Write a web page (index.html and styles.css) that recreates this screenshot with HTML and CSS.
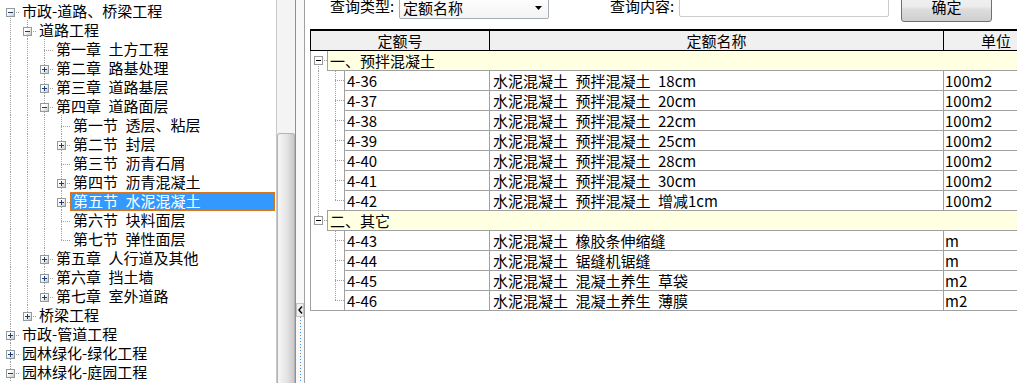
FILE: index.html
```html
<!DOCTYPE html>
<html lang="zh-CN">
<head>
    <meta charset="UTF-8">
    <title>定额查询</title>
    <link rel="stylesheet" href="styles.css">
</head>
<body>
<div class="app">
    <div class="left">
        <div class="tree">
            <div class="row"><span class="n f"><b class="bx mn"></b></span><span class="lb">市政-道路、桥梁工程</span></div>
            <div class="row"><span class="n v"></span><span class="n t"><b class="bx mn"></b></span><span class="lb">道路工程</span></div>
            <div class="row"><span class="n v"></span><span class="n v"></span><span class="n t"></span><span class="lb">第一章&ensp;土方工程</span></div>
            <div class="row"><span class="n v"></span><span class="n v"></span><span class="n t"><b class="bx pl"></b></span><span class="lb">第二章&ensp;路基处理</span></div>
            <div class="row"><span class="n v"></span><span class="n v"></span><span class="n t"><b class="bx pl"></b></span><span class="lb">第三章&ensp;道路基层</span></div>
            <div class="row"><span class="n v"></span><span class="n v"></span><span class="n t"><b class="bx mn"></b></span><span class="lb">第四章&ensp;道路面层</span></div>
            <div class="row"><span class="n v"></span><span class="n v"></span><span class="n v"></span><span class="n t"></span><span class="lb">第一节&ensp;透层、粘层</span></div>
            <div class="row"><span class="n v"></span><span class="n v"></span><span class="n v"></span><span class="n t"><b class="bx pl"></b></span><span class="lb">第二节&ensp;封层</span></div>
            <div class="row"><span class="n v"></span><span class="n v"></span><span class="n v"></span><span class="n t"></span><span class="lb">第三节&ensp;沥青石屑</span></div>
            <div class="row"><span class="n v"></span><span class="n v"></span><span class="n v"></span><span class="n t"><b class="bx pl"></b></span><span class="lb">第四节&ensp;沥青混凝土</span></div>
            <div class="row"><span class="n v"></span><span class="n v"></span><span class="n v"></span><span class="n t"><b class="bx pl"></b></span><span class="lb active">第五节&ensp;水泥混凝土</span></div>
            <div class="row"><span class="n v"></span><span class="n v"></span><span class="n v"></span><span class="n t"></span><span class="lb">第六节&ensp;块料面层</span></div>
            <div class="row"><span class="n v"></span><span class="n v"></span><span class="n v"></span><span class="n l"></span><span class="lb">第七节&ensp;弹性面层</span></div>
            <div class="row"><span class="n v"></span><span class="n v"></span><span class="n t"><b class="bx pl"></b></span><span class="lb">第五章&ensp;人行道及其他</span></div>
            <div class="row"><span class="n v"></span><span class="n v"></span><span class="n t"><b class="bx pl"></b></span><span class="lb">第六章&ensp;挡土墙</span></div>
            <div class="row"><span class="n v"></span><span class="n v"></span><span class="n l"><b class="bx pl"></b></span><span class="lb">第七章&ensp;室外道路</span></div>
            <div class="row"><span class="n v"></span><span class="n l"><b class="bx pl"></b></span><span class="lb">桥梁工程</span></div>
            <div class="row"><span class="n t"><b class="bx pl"></b></span><span class="lb">市政-管道工程</span></div>
            <div class="row"><span class="n t"><b class="bx pl"></b></span><span class="lb">园林绿化-绿化工程</span></div>
            <div class="row"><span class="n t"><b class="bx mn"></b></span><span class="lb">园林绿化-庭园工程</span></div>
        </div>
        <div class="vscroll">
            <div class="track"></div>
            <div class="thumb"></div>
        </div>
    </div>

    <div class="split">
        <div class="sbtn">
            <svg width="5" height="8" viewBox="0 0 5 8"><path d="M4 0.5 L1 4 L4 7.5" fill="none" stroke="#000" stroke-width="1.4"/></svg>
        </div>
        <div class="sline"></div>
    </div>

    <div class="right">
        <div class="bar">
            <span class="lbl">查询类型:</span>
            <div class="combo">
                <span>定额名称</span>
                <svg width="7" height="4" viewBox="0 0 7 4"><polygon points="0,0 7,0 3.5,4" fill="#000"/></svg>
            </div>
            <span class="lbl lbl2">查询内容:</span>
            <input class="inp" type="text">
            <button class="btn">确定</button>
        </div>

        <div class="grid">
            <div class="ghead">
                <div class="gh1">定额号</div>
                <div class="gh2">定额名称</div>
                <div class="gh3">单位</div>
            </div>
            <div class="gbody">
                <div class="gr"><span class="ga f"><b class="bx gmn"></b></span><div class="gc grp">一、预拌混凝土</div></div>
                <div class="gr"><span class="ga v"></span><span class="gb t"></span><div class="gc c1">4-36</div><div class="gc c2">水泥混凝土&ensp;预拌混凝土&ensp;18cm</div><div class="gc c3">100m2</div></div>
                <div class="gr"><span class="ga v"></span><span class="gb t"></span><div class="gc c1">4-37</div><div class="gc c2">水泥混凝土&ensp;预拌混凝土&ensp;20cm</div><div class="gc c3">100m2</div></div>
                <div class="gr"><span class="ga v"></span><span class="gb t"></span><div class="gc c1">4-38</div><div class="gc c2">水泥混凝土&ensp;预拌混凝土&ensp;22cm</div><div class="gc c3">100m2</div></div>
                <div class="gr"><span class="ga v"></span><span class="gb t"></span><div class="gc c1">4-39</div><div class="gc c2">水泥混凝土&ensp;预拌混凝土&ensp;25cm</div><div class="gc c3">100m2</div></div>
                <div class="gr"><span class="ga v"></span><span class="gb t"></span><div class="gc c1">4-40</div><div class="gc c2">水泥混凝土&ensp;预拌混凝土&ensp;28cm</div><div class="gc c3">100m2</div></div>
                <div class="gr"><span class="ga v"></span><span class="gb t"></span><div class="gc c1">4-41</div><div class="gc c2">水泥混凝土&ensp;预拌混凝土&ensp;30cm</div><div class="gc c3">100m2</div></div>
                <div class="gr"><span class="ga v"></span><span class="gb l"></span><div class="gc c1">4-42</div><div class="gc c2">水泥混凝土&ensp;预拌混凝土&ensp;增减1cm</div><div class="gc c3">100m2</div></div>
                <div class="gr"><span class="ga l"><b class="bx gmn"></b></span><div class="gc grp sep">二、其它</div></div>
                <div class="gr"><span class="ga"></span><span class="gb t"></span><div class="gc c1">4-43</div><div class="gc c2">水泥混凝土&ensp;橡胶条伸缩缝</div><div class="gc c3">m</div></div>
                <div class="gr"><span class="ga"></span><span class="gb t"></span><div class="gc c1">4-44</div><div class="gc c2">水泥混凝土&ensp;锯缝机锯缝</div><div class="gc c3">m</div></div>
                <div class="gr"><span class="ga"></span><span class="gb t"></span><div class="gc c1">4-45</div><div class="gc c2">水泥混凝土&ensp;混凝土养生&ensp;草袋</div><div class="gc c3">m2</div></div>
                <div class="gr"><span class="ga"></span><span class="gb l"></span><div class="gc c1">4-46</div><div class="gc c2">水泥混凝土&ensp;混凝土养生&ensp;薄膜</div><div class="gc c3">m2</div></div>
            </div>
        </div>
    </div>
</div>
</body>
</html>
```

FILE: styles.css
```css
:root {
    --dv: repeating-linear-gradient(#a0a0a0 0 1px, transparent 1px 2px);
    --dh: repeating-linear-gradient(to right, #a0a0a0 0 1px, transparent 1px 2px);
}
body {
    margin: 0;
    font-family: "Noto Sans CJK SC", "Noto Sans", sans-serif;
    font-size: 15px;
    color: #000;
    background: #fff;
    overflow: hidden;
}
.app {
    display: flex;
    width: 1017px;
    height: 383px;
    overflow: hidden;
}

/* 左侧树 */
.left {
    display: flex;
    flex: 0 0 296px;
}
.tree {
    flex: 1;
    min-width: 0;
    padding: 1px 0 0 2px;
    overflow: hidden;
}
.row {
    display: flex;
    height: 19px;
}
.n {
    flex: 0 0 17px;
    height: 19px;
    --x: 8px;
    --y: 11px;
}
.v {
    background: var(--dv) var(--x) 0 / 1px 100% no-repeat;
}
.t {
    background: var(--dv) var(--x) 0 / 1px 100% no-repeat,
                var(--dh) right 0 top var(--y) / calc(100% - var(--x)) 1px no-repeat;
}
.l {
    background: var(--dv) var(--x) 0 / 1px calc(var(--y) + 1px) no-repeat,
                var(--dh) right 0 top var(--y) / calc(100% - var(--x)) 1px no-repeat;
}
.f {
    background: var(--dv) var(--x) var(--y) / 1px calc(100% - var(--y)) no-repeat,
                var(--dh) right 0 top var(--y) / calc(100% - var(--x)) 1px no-repeat;
}
.bx {
    display: block;
    width: 9px;
    height: 9px;
    box-sizing: border-box;
    margin: 7px 0 0 4px;
    border: 1px solid #919b9c;
}
.mn {
    background: linear-gradient(#1f3a7a, #1f3a7a) center / 5px 1px no-repeat,
                linear-gradient(135deg, #fff 35%, #c9c9c0);
}
.pl {
    background: linear-gradient(#1f3a7a, #1f3a7a) center / 5px 1px no-repeat,
                linear-gradient(#1f3a7a, #1f3a7a) center / 1px 5px no-repeat,
                linear-gradient(135deg, #fff 35%, #c9c9c0);
}
.lb {
    flex: 1;
    min-width: 0;
    height: 19px;
    box-sizing: border-box;
    margin-right: 1px;
    padding-left: 2px;
    border: 1px solid transparent;
    line-height: 17px;
    white-space: nowrap;
}
.lb.active {
    margin-top: 1px;
    background: #3399ff;
    color: #fff;
    border: 1px dotted #e07b20;
    line-height: 15px;
    padding-bottom: 1px;
}

.vscroll {
    display: flex;
    flex-direction: column;
    flex: 0 0 20px;
    box-sizing: border-box;
    border-left: 1px solid #c8c8c8;
    border-right: 1px solid #8f8f8f;
    background: #f4f4f4;
}
.track {
    height: 133px;
}
.thumb {
    flex: 1;
    border: 1px solid #b3b3b3;
    border-bottom: 0;
    border-radius: 3px 3px 0 0;
    background: linear-gradient(to right, #f6f6f6, #e4e4e4 55%, #c9c9c9);
}

/* 分隔条 */
.split {
    display: flex;
    flex-direction: column;
    flex: 0 0 9px;
    box-sizing: border-box;
    border-right: 1px solid #a0a0a0;
    background: #f8f8f8;
}
.sbtn {
    display: flex;
    align-items: center;
    justify-content: center;
    height: 14px;
    margin-top: 303px;
    box-sizing: border-box;
    border: 1px solid #c4c4c4;
    background: #efefef;
}
.sline {
    flex: 1;
    background: repeating-linear-gradient(#4a90e2 0 1px, transparent 1px 3px) 4px 0 / 1px 100% no-repeat;
}

/* 右侧 */
.right {
    flex: 1;
    min-width: 0;
    overflow: hidden;
}
.bar {
    display: flex;
    align-items: flex-end;
    height: 22px;
    padding-left: 25px;
}
.lbl {
    flex: 0 0 69px;
    line-height: 20px;
    margin-bottom: 6px;
    white-space: nowrap;
}
.lbl2 {
    margin-left: 61px;
}
.combo {
    display: flex;
    align-items: center;
    justify-content: space-between;
    flex: 0 0 150px;
    height: 23px;
    margin-bottom: 3px;
    padding: 0 6px 0 3px;
    box-sizing: border-box;
    border: 1px solid #a5acb5;
    border-radius: 2px;
    background: linear-gradient(#fff, #f3f3f3);
    line-height: 20px;
}
.inp {
    flex: 0 0 210px;
    height: 21px;
    margin: 0 0 5px;
    padding: 0;
    box-sizing: border-box;
    border: 1px solid #cbcbcb;
    border-radius: 2px;
    background: #fff;
}
.btn {
    flex: 0 0 91px;
    height: 28px;
    margin-left: 12px;
    padding: 0 0 3px;
    border: 1px solid #707070;
    border-radius: 3px;
    background: linear-gradient(#f3f3f3, #ebebeb 45%, #dddddd 55%, #cfcfcf);
    font: inherit;
    line-height: 22px;
    color: #000;
}

/* 表格 */
.grid {
    width: 738px;
    margin: 7px 0 0 5px;
}
.ghead {
    display: flex;
    height: 22px;
    box-sizing: border-box;
    border-top: 2px solid #000;
    border-bottom: 1px solid #000;
    border-left: 1px solid #000;
    background: #f0f0f0;
    line-height: 19px;
    text-align: center;
}
.gh1 {
    flex: 0 0 178px;
    border-right: 1px solid #000;
}
.gh2 {
    flex: 0 0 453px;
    border-right: 1px solid #000;
}
.gh3 {
    flex: 1;
}
.gbody {
    border-left: 1px solid #a0a0a0;
}
.gr {
    display: flex;
    height: 20px;
}
.ga,
.gb {
    height: 20px;
    box-sizing: border-box;
    --y: 9px;
}
.ga {
    flex: 0 0 16px;
    --x: 7px;
}
.gb {
    flex: 0 0 17px;
    --x: 8px;
}
.ga .bx {
    margin: 5px 0 0 3px;
}
.gmn {
    border-color: #9a9a9a;
    background: linear-gradient(#000, #000) center / 5px 1px no-repeat, #fff;
}
.gr:last-child .ga,
.gr:last-child .gb {
    border-bottom: 1px solid #a0a0a0;
}
.gc {
    height: 20px;
    box-sizing: border-box;
    border-left: 1px solid #a0a0a0;
    border-bottom: 1px solid #a0a0a0;
    line-height: 19px;
    white-space: nowrap;
    overflow: hidden;
}
.c1 {
    flex: 0 0 145px;
    padding-left: 2px;
}
.c2 {
    flex: 0 0 454px;
    padding-left: 3px;
}
.c3 {
    flex: 1;
    padding-left: 1px;
}
.grp {
    flex: 1;
    padding-left: 2px;
    background: #ffffe1;
}
.grp.sep {
    box-shadow: 0 -1px 0 #a0a0a0;
}
```
